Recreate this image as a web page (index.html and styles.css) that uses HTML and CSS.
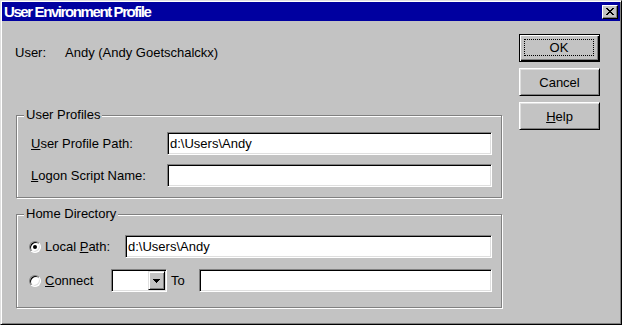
FILE: index.html
```html
<!DOCTYPE html>
<html>
<head>
  <link rel="stylesheet" href="styles.css">
</head>
<body>
  <div class="window">
    <div class="titlebar">
      <span class="title">User Environment Profile</span>
      <span class="close-btn">
        <svg width="8" height="7" viewBox="0 0 8 7" shape-rendering="crispEdges">
          <path d="M0 0h2v1h-2z M6 0h2v1h-2z M1 1h2v1h-2z M5 1h2v1h-2z M2 2h4v1h-4z M3 3h2v1h-2z M2 4h4v1h-4z M1 5h2v1h-2z M5 5h2v1h-2z M0 6h2v1h-2z M6 6h2v1h-2z" fill="#000"/>
        </svg>
      </span>
    </div>
    <div class="client">
      <div class="main">
        <div class="user-row">
          <span class="user-label">User:</span>
          <span>Andy (Andy Goetschalckx)</span>
        </div>

        <fieldset class="group profiles">
          <legend>User Profiles</legend>
          <div class="row">
            <span class="field-label"><u>U</u>ser Profile Path:</span>
            <div class="textbox">d:\Users\Andy</div>
          </div>
          <div class="row">
            <span class="field-label"><u>L</u>ogon Script Name:</span>
            <div class="textbox"></div>
          </div>
        </fieldset>

        <fieldset class="group home">
          <legend>Home Directory</legend>
          <div class="row">
            <span class="radio"><span class="dot"></span></span>
            <span class="radio-label local">Local <u>P</u>ath:</span>
            <div class="textbox">d:\Users\Andy</div>
          </div>
          <div class="row">
            <span class="radio"></span>
            <span class="radio-label connect"><u>C</u>onnect</span>
            <div class="combo">
              <span class="combo-btn">
                <svg width="7" height="4" viewBox="0 0 7 4" shape-rendering="crispEdges">
                  <path d="M0 0h7v1h-7z M1 1h5v1h-5z M2 2h3v1h-3z M3 3h1v1h-1z" fill="#000"/>
                </svg>
              </span>
            </div>
            <span class="to-label">To</span>
            <div class="textbox"></div>
          </div>
        </fieldset>
      </div>

      <div class="side">
        <div class="btn default"><span class="focus">OK</span></div>
        <div class="btn">Cancel</div>
        <div class="btn"><span><u>H</u>elp</span></div>
      </div>
    </div>
  </div>
</body>
</html>
```

FILE: styles.css
```css
body {
  margin: 0;
  font-family: "Liberation Sans", Arial, sans-serif;
  font-size: 13px;
  color: #000;
}

.window {
  width: 622px;
  height: 325px;
  box-sizing: border-box;
  background: #c3c3c3;
  border: 1px solid;
  border-color: #dfdfdf #000 #000 #dfdfdf;
  box-shadow: inset 1px 1px 0 #fff, inset -1px -1px 0 #808080;
  padding: 1px;
  display: flex;
  flex-direction: column;
}

.titlebar {
  height: 19px;
  background: #0000a0;
  color: #fff;
  display: flex;
  align-items: center;
  justify-content: space-between;
  padding: 0 2px;
}

.title {
  font-weight: bold;
  font-size: 15px;
  letter-spacing: -1.4px;
  line-height: 19px;
}

.close-btn {
  width: 16px;
  height: 14px;
  box-sizing: border-box;
  background: #c3c3c3;
  border: 1px solid;
  border-color: #fff #000 #000 #fff;
  box-shadow: inset -1px -1px 0 #808080;
  display: flex;
  align-items: center;
  justify-content: center;
}

.client {
  flex: 1;
  display: flex;
  padding-left: 14px;
}

.main {
  width: 486px;
  margin-top: 24px;
  display: flex;
  flex-direction: column;
}

.user-row {
  height: 16px;
  line-height: 16px;
  display: flex;
  margin-left: -1px;
}

.user-label {
  width: 50px;
}

.group {
  margin: 0;
  min-width: 0;
  border: 1px solid #808080;
  box-shadow: 1px 1px 0 #fff, inset 1px 1px 0 #fff;
  padding: 0 9px 10px 7px;
}

.group legend {
  padding: 0 2px;
  line-height: 16px;
  background: #c3c3c3;
}

.profiles {
  margin-top: 46px;
}

.profiles .row {
  margin-top: 9px;
  padding-left: 7px;
}

.home {
  margin-top: 8px;
  padding-bottom: 15px;
}

.home .row {
  margin-top: 11px;
  padding-left: 5px;
}

.home .row:first-of-type {
  margin-top: 13px;
}

.row {
  display: flex;
  align-items: center;
  height: 23px;
}

.field-label {
  width: 136px;
}

.textbox {
  flex: 1;
  height: 23px;
  box-sizing: border-box;
  background: #fff;
  border: 1px solid;
  border-color: #808080 #fff #fff #808080;
  box-shadow: inset 1px 1px 0 #000, inset -1px -1px 0 #dfdfdf;
  padding: 0 2px;
  display: flex;
  align-items: center;
}

.radio {
  width: 12px;
  height: 12px;
  box-sizing: border-box;
  border-radius: 50%;
  background: #fff;
  border: 1px solid;
  border-color: #808080 #fff #fff #808080;
  box-shadow: inset 1px 1px 0 #000, inset -1px -1px 0 #dfdfdf;
  display: flex;
  align-items: center;
  justify-content: center;
  margin-right: 4px;
}

.dot {
  width: 4px;
  height: 4px;
  border-radius: 50%;
  background: #000;
}

.radio-label.local {
  width: 80px;
}

.radio-label.connect {
  width: 66px;
}

.combo {
  width: 56px;
  height: 23px;
  box-sizing: border-box;
  background: #fff;
  border: 1px solid;
  border-color: #808080 #fff #fff #808080;
  box-shadow: inset 1px 1px 0 #000, inset -1px -1px 0 #dfdfdf;
  padding: 1px;
  display: flex;
  justify-content: flex-end;
}

.combo-btn {
  width: 17px;
  box-sizing: border-box;
  background: #c3c3c3;
  border: 1px solid;
  border-color: #dfdfdf #000 #000 #dfdfdf;
  box-shadow: inset 1px 1px 0 #fff, inset -1px -1px 0 #808080;
  display: flex;
  align-items: center;
  justify-content: center;
}

.to-label {
  width: 28px;
  margin-left: 4px;
}

.side {
  margin-left: 17px;
  margin-top: 13px;
  display: flex;
  flex-direction: column;
  gap: 6px;
}

.btn {
  width: 81px;
  height: 28px;
  box-sizing: border-box;
  border: 1px solid;
  border-color: #fff #000 #000 #fff;
  box-shadow: inset 1px 1px 0 #dfdfdf, inset -1px -1px 0 #808080;
  display: flex;
  align-items: center;
  justify-content: center;
}

.btn.default {
  border-color: #000;
  box-shadow: inset 1px 1px 0 #fff, inset -1px -1px 0 #000, inset -2px -2px 0 #808080;
  padding: 4px 5px 5px 4px;
}

.focus {
  flex: 1;
  align-self: stretch;
  border: 1px dotted #000;
  display: flex;
  align-items: center;
  justify-content: center;
}
```
